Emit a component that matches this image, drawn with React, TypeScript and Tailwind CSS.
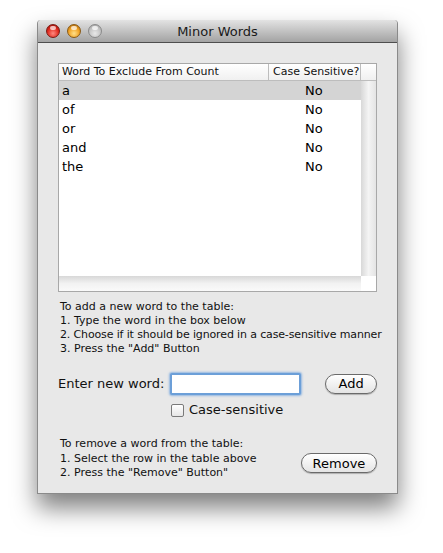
import React from "react";

const font = { fontFamily: '"DejaVu Sans", "Lucida Grande", sans-serif' };

function Light({ color }: { color: "red" | "yellow" | "gray" }) {
  const bg =
    color === "red"
      ? "bg-[radial-gradient(circle_at_50%_70%,#ff8a80_0%,#e0281c_55%,#8a0d08_100%)] border-[#7a1a14]"
      : color === "yellow"
      ? "bg-[radial-gradient(circle_at_50%_70%,#ffe08a_0%,#f0a020_55%,#9a5a08_100%)] border-[#8a5a14]"
      : "bg-[radial-gradient(circle_at_50%_70%,#e8e8e8_0%,#c4c4c4_55%,#9a9a9a_100%)] border-[#8a8a8a]";
  return (
    <div className={`relative w-[14px] h-[14px] rounded-full border ${bg}`}>
      <div className="absolute left-[3px] top-[1px] w-[6px] h-[4px] rounded-full bg-white/70" />
    </div>
  );
}

const rows = ["a", "of", "or", "and", "the"];

export default function App() {
  return (
    <div className="w-[443px] h-[553px] bg-white pt-[20px] pl-[37px]" style={font}>
      <div className="w-[361px] h-[474px] flex flex-col bg-[#e8e8e8] rounded-t-[4px] shadow-[0_14px_24px_rgba(0,0,0,0.5)] border-x border-b border-[#8a8a8a]">
        {/* Title bar */}
        <div className="relative h-[23px] flex items-center rounded-t-[4px] bg-gradient-to-b from-[#e3e3e3] to-[#a3a3a3] border-b border-[#4e4e4e] pl-[8px] gap-[7px]">
          <Light color="red" />
          <Light color="yellow" />
          <Light color="gray" />
          <div className="absolute inset-0 flex items-center justify-center text-[13px] text-[#1a1a1a] pt-[1px]">
            Minor Words
          </div>
        </div>

        {/* Content */}
        <div className="flex flex-col pl-[20px] pr-[20px] pt-[20px]">
          {/* Table */}
          <div className="w-[319px] h-[229px] border border-[#a8a8a8] bg-white flex flex-col">
            <div className="h-[17px] flex border-b border-[#bdbdbd] bg-gradient-to-b from-[#ffffff] to-[#f0f0f0] text-[11px] text-[#111]">
              <div className="w-[210px] border-r border-[#bdbdbd] pl-[3px] leading-[16px]">Word To Exclude From Count</div>
              <div className="w-[92px] border-r border-[#bdbdbd] pl-[4px] leading-[16px]">Case Sensitive?</div>
              <div className="flex-1" />
            </div>
            <div className="flex flex-1">
              <div className="flex flex-col w-[302px]">
                <div className="flex-1 flex flex-col">
                  {rows.map((r, i) => (
                    <div
                      key={r}
                      className={`h-[19px] flex items-center text-[13px] text-black ${i === 0 ? "bg-[#d4d4d4]" : ""}`}
                    >
                      <div className="w-[210px] pl-[3px]">{r}</div>
                      <div className="flex-1 pl-[36px]">No</div>
                    </div>
                  ))}
                </div>
                <div className="h-[15px] bg-gradient-to-b from-[#d8d8d8] via-[#f2f2f2] to-[#fafafa]" />
              </div>
              <div className="flex flex-col flex-1">
                <div className="flex-1 bg-gradient-to-r from-[#d8d8d8] via-[#f4f4f4] to-[#e4e4e4]" />
                <div className="h-[15px] bg-white" />
              </div>
            </div>
          </div>

          {/* Add instructions */}
          <div className="mt-[8px] pl-[2px] text-[11px] leading-[14px] text-[#111] whitespace-nowrap">
            <div>To add a new word to the table:</div>
            <div>1. Type the word in the box below</div>
            <div className="tracking-[-0.14px]">2. Choose if it should be ignored in a case-sensitive manner</div>
            <div>3. Press the "Add" Button</div>
          </div>

          {/* Entry row */}
          <div className="mt-[17px] flex items-center h-[22px]">
            <div className="w-[112px] text-[13px] text-[#111] whitespace-nowrap">Enter new word:</div>
            <div className="w-[132px] h-[22px] rounded-[2px] border-[2px] border-[#6c9fd8] shadow-[0_0_2px_1px_rgba(90,150,220,0.6)] bg-white" />
            <div className="ml-[24px] w-[52px] h-[20px] rounded-full border border-[#6a6a6a] bg-gradient-to-b from-white to-[#e4e4e4] shadow-[0_1px_1px_rgba(0,0,0,0.25)] flex items-center justify-center text-[13px] text-black">
              Add
            </div>
          </div>
          <div className="mt-[7px] ml-[113px] flex items-center gap-[5px] h-[16px]">
            <div className="w-[13px] h-[13px] rounded-[2px] border border-[#7a7a7a] bg-gradient-to-b from-white to-[#e6e6e6]" />
            <div className="text-[13px] text-[#111]">Case-sensitive</div>
          </div>

          {/* Remove */}
          <div className="mt-[19px] flex items-center">
            <div className="flex-1 pl-[2px] text-[11px] leading-[14.5px] text-[#111] whitespace-nowrap">
              <div>To remove a word from the table:</div>
              <div>1. Select the row in the table above</div>
              <div>2. Press the "Remove" Button"</div>
            </div>
            <div className="mt-[9px] w-[76px] h-[20px] rounded-full border border-[#6a6a6a] bg-gradient-to-b from-white to-[#e4e4e4] shadow-[0_1px_1px_rgba(0,0,0,0.25)] flex items-center justify-center text-[13px] text-black">
              Remove
            </div>
          </div>
        </div>
      </div>
    </div>
  );
}
